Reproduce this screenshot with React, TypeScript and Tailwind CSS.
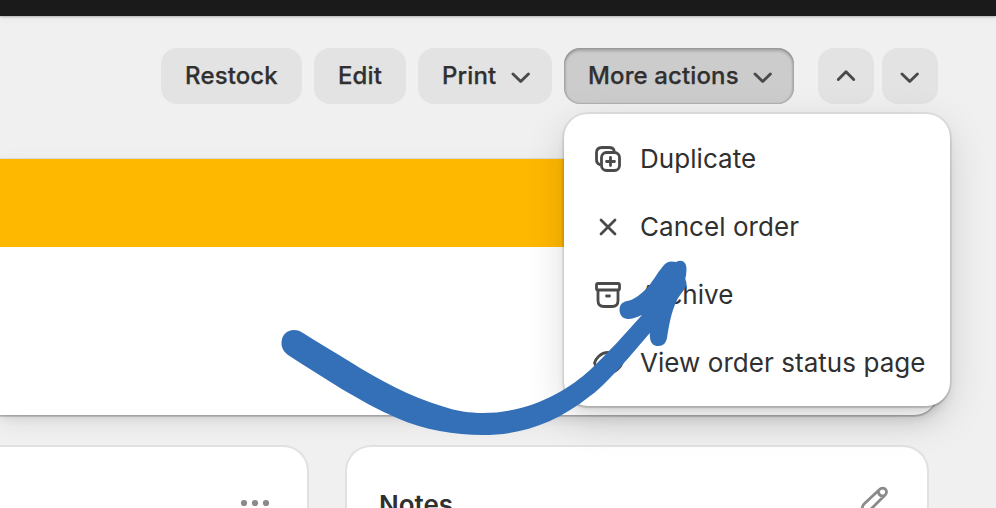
import type { ReactNode } from "react";

function Chevron({ up = false }: { up?: boolean }) {
  return (
    <svg width="20" height="20" viewBox="0 0 20 20" fill="none" stroke="#4a4a4a" strokeWidth="2.9" strokeLinecap="round" strokeLinejoin="round">
      <path d={up ? "M2.300 13.500 10 5.800l7.700 7.700" : "M2 8l7.700 7.500L17.400 8"} />
    </svg>
  );
}

function Button({ children, className }: { children: ReactNode; className: string }) {
  return (
    <button className={`flex h-14 items-center rounded-2xl text-[24px] leading-8 font-medium tracking-[0.12px] whitespace-nowrap [-webkit-text-stroke:0.25px_#303030] ${className}`}>
      {children}
    </button>
  );
}

function MenuItem({ icon, children }: { icon: ReactNode; children: ReactNode }) {
  return (
    <li className="flex h-17 items-center gap-3">
      <svg width="40" height="40" viewBox="0 0 40 40" fill="none" stroke="#4a4a4a" strokeWidth="2.8" strokeLinecap="round" strokeLinejoin="round">
        {icon}
      </svg>
      <span className="text-[26px] leading-10 font-normal tracking-[0.05px] whitespace-nowrap">{children}</span>
    </li>
  );
}

export default function App() {
  return (
    <div className="relative h-[508px] w-[996px] overflow-hidden bg-[#f0f0f0] text-[#303030] [font-family:Inter,'Liberation_Sans',sans-serif]">
      <header className="h-4 bg-[#1a1a1a] shadow-[0_1px_2px_rgba(0,0,0,.25),0_2px_10px_rgba(0,0,0,.05)]" />

      <div className="mt-8 flex pl-[161px]">
        <Button className="w-[141px] justify-center bg-[#e3e3e3]">Restock</Button>
        <Button className="ml-3 w-[92px] justify-center bg-[#e3e3e3]">Edit</Button>
        <Button className="ml-3 w-[134px] justify-between bg-[#e3e3e3] pr-[21px] pl-6">
          Print <Chevron />
        </Button>
        <div className="relative ml-3">
          <Button className="w-[230px] justify-between bg-[#cccccc] pr-[21px] pl-6 shadow-[inset_0_3px_3px_rgba(0,0,0,.20),inset_2px_0_2px_rgba(0,0,0,.12),inset_-2px_0_2px_rgba(0,0,0,.12),inset_0_-1px_1px_rgba(0,0,0,.08)]">
            More actions <Chevron />
          </Button>
          <div className="absolute top-[66px] left-0 z-10 h-[292px] w-[386px] rounded-3xl bg-white pt-[11px] pl-6 shadow-[0_0_0_2px_rgba(0,0,0,.06),0_2px_2px_rgba(0,0,0,.16),0_6px_8px_rgba(0,0,0,.06),0_12px_40px_rgba(0,0,0,.14)]">
            <ul>
              <MenuItem
                icon={
                  <>
                    <path d="M11.500 25.500C9 24.500 8.500 23 8.500 20.500V14c0-3.800 1.800-5.500 5.500-5.500h7c3 0 4.600 1 5.200 3.400" />
                    <rect x="13.5" y="13.5" width="18" height="18" rx="5" />
                    <path d="M22.500 18.500v8M18.500 22.500h8" />
                  </>
                }
              >
                Duplicate
              </MenuItem>
              <MenuItem icon={<path d="m13 13 14 14M27 13 13 27" />}>Cancel order</MenuItem>
              <MenuItem
                icon={
                  <>
                    <rect x="8.5" y="8.5" width="23" height="6.500" rx="1.500" />
                    <path d="M10 15.500v10c0 4 2 6 6 6h8c4 0 6-2 6-6v-10M18.500 21h3" />
                  </>
                }
              >
                Archive
              </MenuItem>
              <MenuItem
                icon={
                  <>
                    <path d="M6.500 20c1-4 6-10.500 13.500-10.500S33 16 34 20c-1 4-6.500 10-14 10S7.500 24 6.500 20Z" />
                    <circle cx="20" cy="20" r="4" />
                  </>
                }
              >
                View order status page
              </MenuItem>
            </ul>
          </div>
        </div>
        <Button className="ml-6 w-14 justify-center bg-[#e3e3e3]">
          <Chevron up />
        </Button>
        <Button className="ml-2 w-14 justify-center bg-[#e3e3e3]">
          <Chevron />
        </Button>
      </div>

      <section className="mt-[55px] h-[256px] w-[938px] overflow-hidden rounded-br-3xl bg-white shadow-[0_0_0_1px_rgba(0,0,0,.07),0_2px_1px_rgba(0,0,0,.18),0_5px_8px_rgba(0,0,0,.06),0_8px_24px_rgba(0,0,0,.07)]">
        <div className="h-[88px] bg-[#ffb800]" />
      </section>

      <div className="mt-[32px] flex gap-[40px]">
        <section className="flex h-[90px] w-[307px] justify-end rounded-tr-3xl bg-white pt-[44px] pr-[37px] shadow-[0_0_0_2px_#e1e1e1]">
          <svg width="30" height="24" viewBox="0 0 30 24" fill="#8a8a8a">
            <circle cx="4" cy="12" r="3.100" />
            <circle cx="15" cy="12" r="3.100" />
            <circle cx="26" cy="12" r="3.100" />
          </svg>
        </section>
        <section className="flex h-[90px] w-[580px] justify-between rounded-t-3xl bg-white pt-8 pr-8 pl-8 shadow-[0_0_0_2px_#e1e1e1]">
          <h2 className="pt-[6px] text-[26px] leading-10 font-semibold">Notes</h2>
          <svg className="shrink-0" width="44" height="40" viewBox="0 0 44 40" fill="none" stroke="#8a8a8a" strokeWidth="2.8" strokeLinecap="round" strokeLinejoin="round">
            <path d="M28.500 10.500c1.800-1.800 4.300-1.800 5.900-.3s1.500 4.100-.3 5.900L19 31c-2 2-5 2.500-8 2.500 0-3-.5-6 2-8.500Z M27.500 12.500c0 3 1.500 4.500 4.500 4.500" />
          </svg>
        </section>
      </div>

      <svg className="pointer-events-none absolute inset-0 z-20" width="996" height="508" viewBox="0 0 996 508" fill="#3370b7">
        <path d="M303 333C319 343 335 352.500 350 361.700C380 380.500 410 396.500 443 406.500C456 411 470 413 483 413C530 413 568 390 590 370C608 353 626 333 642 315C637 317 633 319 628 319C623 319 619.500 315 619.500 310C619.500 305 622 302 627 301C634 300 641 294 647 288C654 280 659 270 665 264C668 261 672 261 676 262C682 259 686.500 262 686.500 269L686 276Q684.500 278 686.500 283C687 288 680 294 677 300C671 313 669 325 667 338C666 343 663 346 658.500 346C653 346 649.500 343 649.800 333C637 348 623 365 608 380C602 386 596 392 590 396C555 424 520 435 483 435C455 435 424 430 397 418C360 402 324 378 288 355C284 352 281.500 348 281.500 343C281.500 335 287 330 294 330C298 330 300 331 303 333Z" />
      </svg>
    </div>
  );
}
